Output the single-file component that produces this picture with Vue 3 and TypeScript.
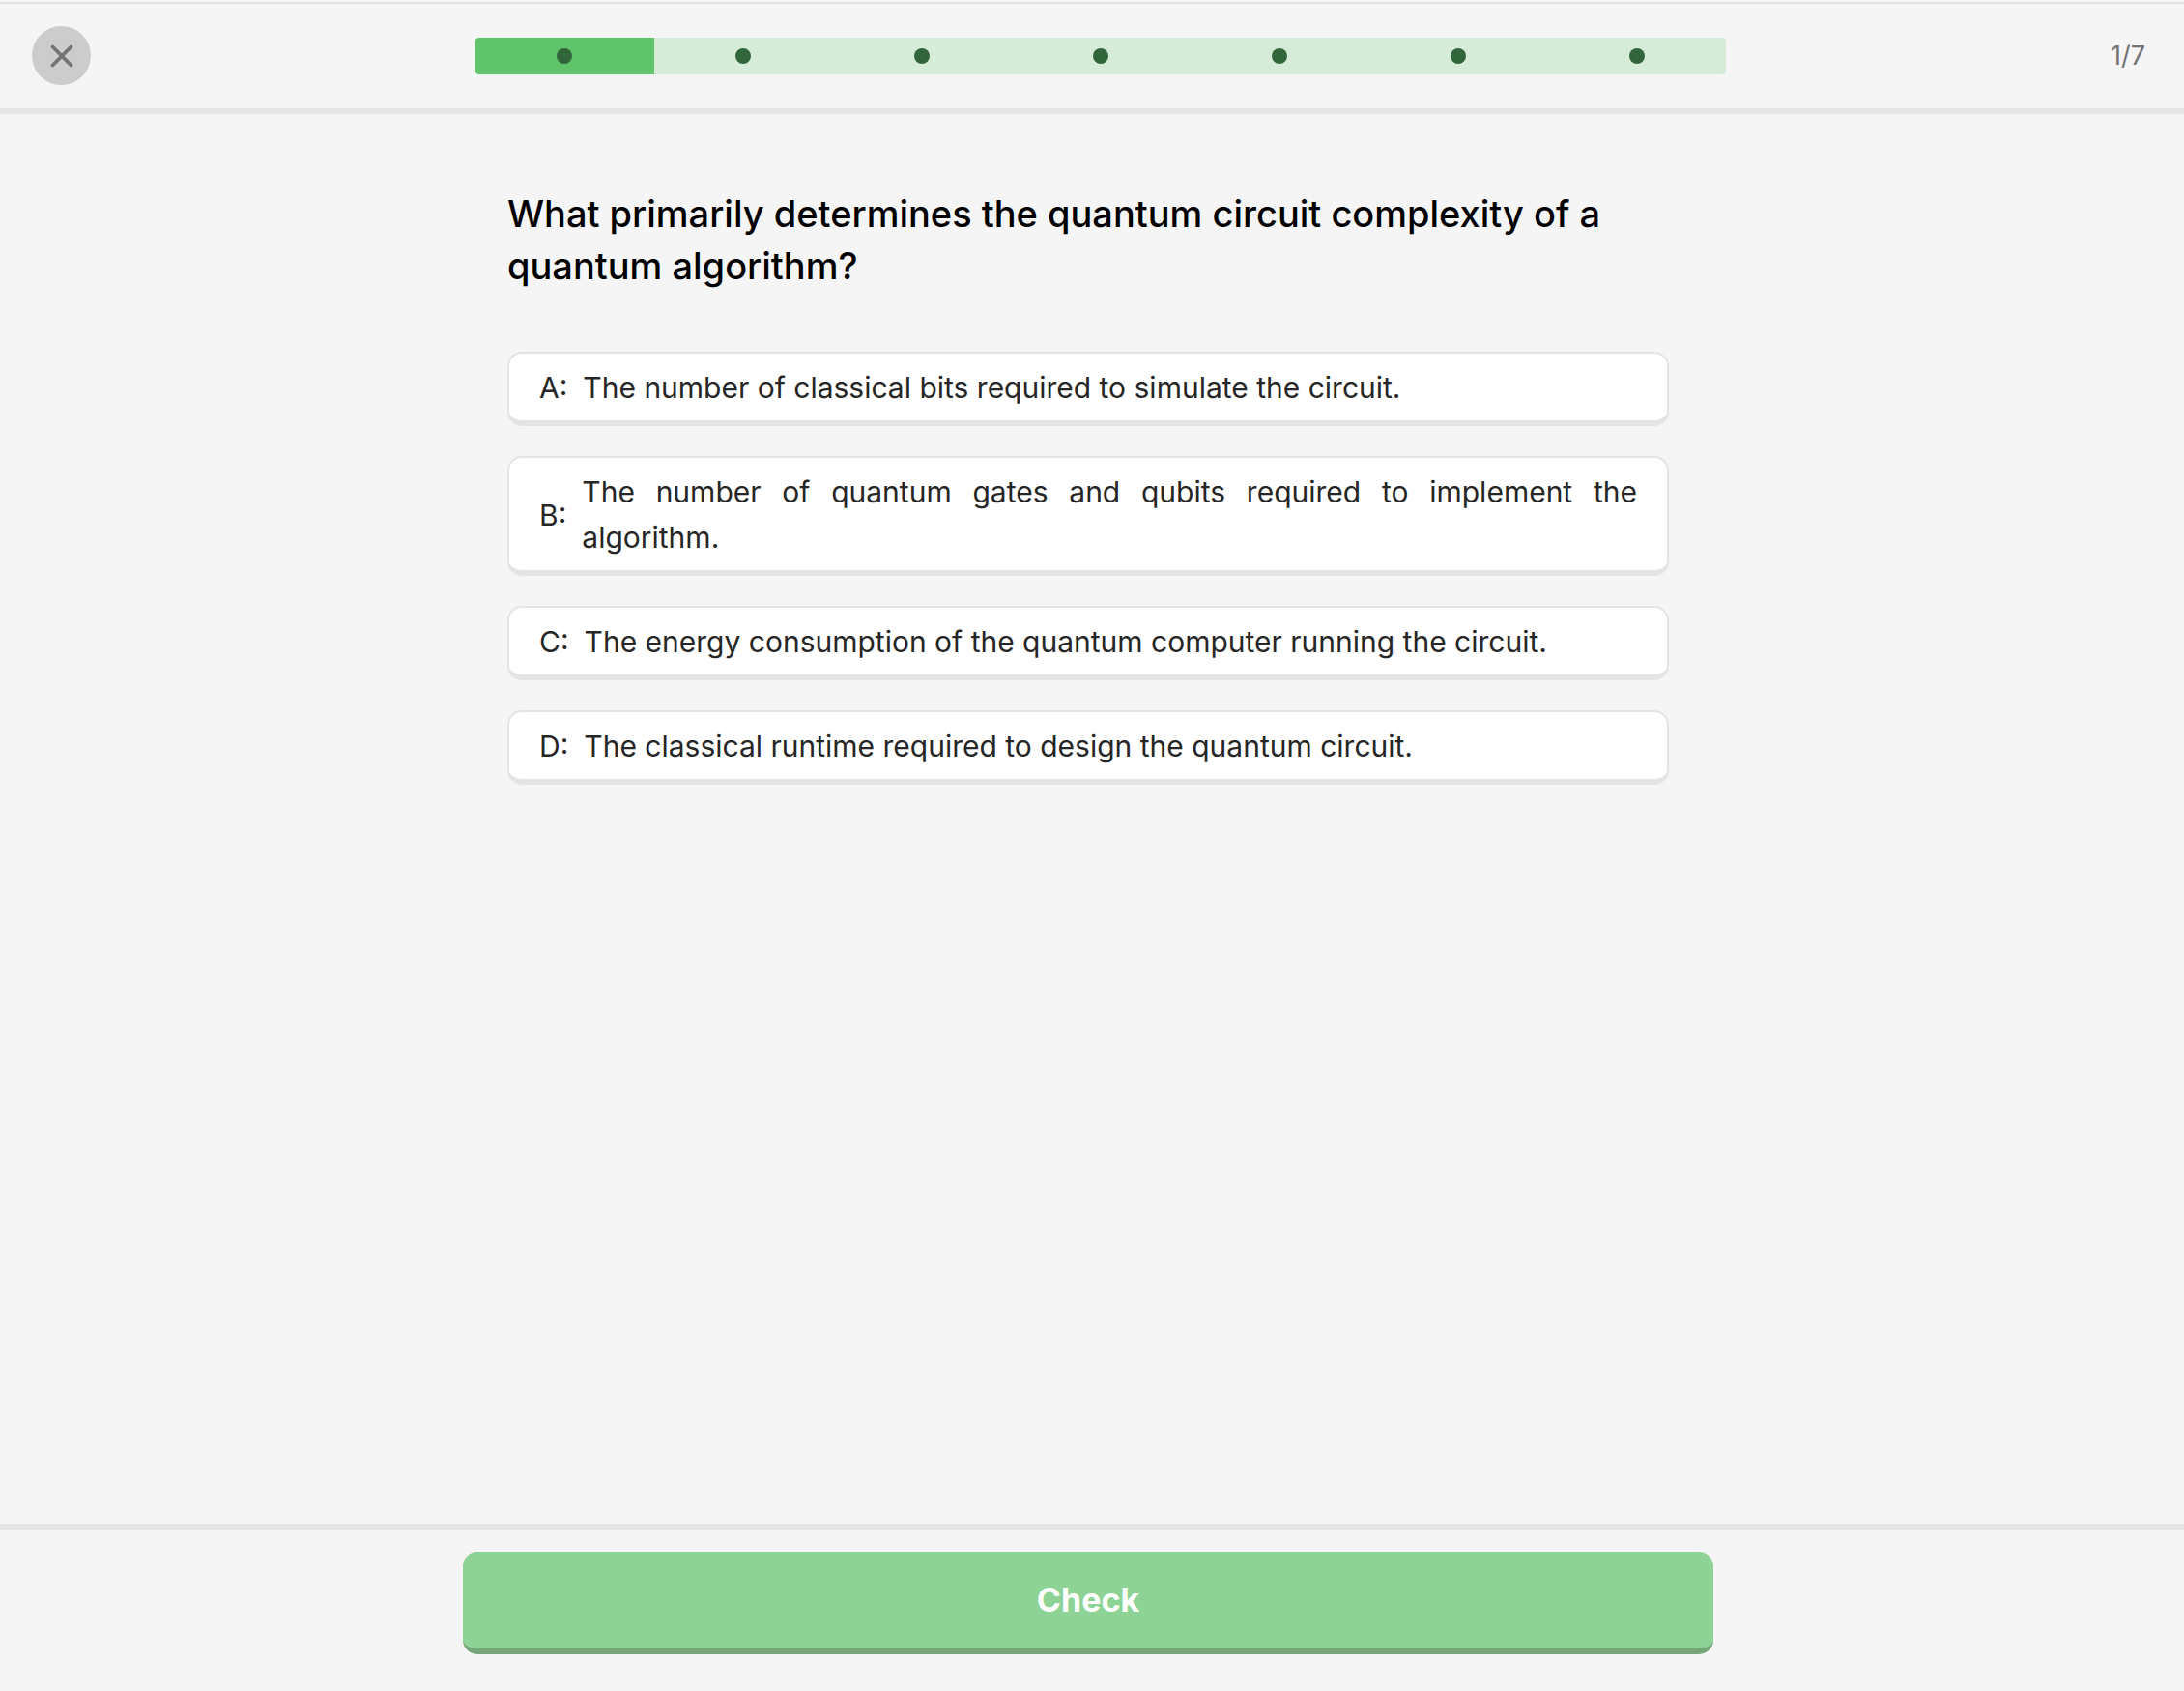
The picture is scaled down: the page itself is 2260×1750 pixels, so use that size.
<script setup lang="ts">
import { ref } from 'vue'

interface Option {
  letter: string
  text: string
}

const total = 7
const current = ref(1)
const selected = ref<string | null>(null)

const question = 'What primarily determines the quantum circuit complexity of a quantum algorithm?'
const options: Option[] = [
  { letter: 'A', text: 'The number of classical bits required to simulate the circuit.' },
  { letter: 'B', text: 'The number of quantum gates and qubits required to implement the algorithm.' },
  { letter: 'C', text: 'The energy consumption of the quantum computer running the circuit.' },
  { letter: 'D', text: 'The classical runtime required to design the quantum circuit.' },
]
</script>

<template>
  <div class="quiz">
    <header class="top">
      <button class="close" type="button" aria-label="Close quiz">
        <svg viewBox="0 0 24 24" width="24" height="24" aria-hidden="true">
          <path d="M2.5 2.5 21.5 21.5M21.5 2.5 2.5 21.5" />
        </svg>
      </button>
      <div class="progress" role="progressbar" aria-valuemin="0" :aria-valuenow="current" :aria-valuemax="total">
        <span v-for="n in total" :key="n" class="step" :class="{ done: n <= current }">
          <span class="dot"></span>
        </span>
      </div>
      <span class="count">{{ current }}/{{ total }}</span>
    </header>

    <main class="body">
      <section class="card">
        <h1 class="question">{{ question }}</h1>
        <div class="options">
          <button
            v-for="o in options"
            :key="o.letter"
            type="button"
            class="option"
            :aria-pressed="selected === o.letter"
            @click="selected = o.letter"
          >
            <span>{{ o.letter }}:</span>
            <span class="answer">{{ o.text }}</span>
          </button>
        </div>
      </section>
    </main>

    <footer class="bottom">
      <button class="check" type="button">Check</button>
    </footer>
  </div>
</template>

<style>
body {
  margin: 0;
  background: #f5f5f5;
}
</style>

<style scoped>
.quiz {
  box-sizing: border-box;
  min-height: 100vh;
  display: flex;
  flex-direction: column;
  background: #f5f5f5;
  font-family: Inter, "Liberation Sans", sans-serif;
}

.quiz::before {
  content: "";
  height: 2px;
  margin-top: 2px;
  background: #e4e2df;
}

button {
  font: inherit;
  border: 0;
  cursor: pointer;
}

.top {
  display: flex;
  align-items: center;
  justify-content: space-between;
  gap: 24px;
  padding: 23px 40px 24px 33px;
  border-bottom: 6px solid #e4e4e4;
}

.close {
  display: flex;
  align-items: center;
  justify-content: center;
  flex: none;
  width: 61px;
  height: 61px;
  padding: 0;
  border-radius: 50%;
  background: #ccc;
}

.close path {
  fill: none;
  stroke: #737373;
  stroke-width: 3.7;
  stroke-linecap: round;
}

.progress {
  display: flex;
  flex: 0 1 1294px;
  height: 38px;
  border-radius: 4px;
  overflow: hidden;
  background: #d7ebd9;
}

.step {
  flex: 1;
  display: flex;
  align-items: center;
  justify-content: center;
}

.step.done {
  background: #60c46c;
}

.dot {
  width: 16px;
  height: 16px;
  border-radius: 50%;
  background: #30663a;
}

.count {
  font-size: 27px;
  line-height: 40px;
  color: #737373;
}

.body {
  flex: 1;
  padding: 76px 32px 48px 24px;
}

.card {
  max-width: 1202px;
  margin: 0 auto;
}

.question {
  margin: 0 0 62px;
  font-size: 38px;
  line-height: 54px;
  font-weight: 450;
  color: #000;
}

.options {
  display: flex;
  flex-direction: column;
  gap: 31px;
}

.option {
  display: flex;
  align-items: center;
  gap: 16px;
  padding: 12px 31px 10px;
  border: 2px solid #e4e4e4;
  border-bottom-width: 6px;
  border-radius: 15px;
  background: #fff;
  font-size: 30px;
  line-height: 47px;
  color: #262626;
  text-align: justify;
}

.bottom {
  padding: 23px 32px 38px 24px;
  border-top: 6px solid #e4e4e4;
}

.check {
  display: block;
  width: 100%;
  max-width: 1294px;
  margin: 0 auto;
  padding: 26px 24px;
  border-bottom: 6px solid #76a57a;
  border-radius: 15px;
  background: #8cd395;
  font-size: 34px;
  line-height: 48px;
  font-weight: 700;
  color: #fff;
}
</style>
